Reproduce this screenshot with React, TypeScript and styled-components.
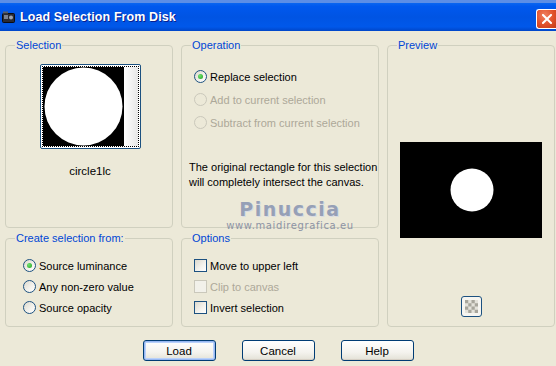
import React from 'react';
import styled, { createGlobalStyle } from 'styled-components';

const face = '#ECE9D8';
const groupBorder = '#D0D0BF';
const xpBlue = '#0046D5';
const dark = '#1C5180';
const disabledText = '#ACA899';

const Global = createGlobalStyle`
  html, body {
    margin: 0;
    padding: 0;
    width: 556px;
    height: 366px;
    overflow: hidden;
    background: ${face};
  }
  body {
    font-family: "Liberation Sans", Arial, sans-serif;
    font-size: 11px;
    color: #000;
  }
`;

const Window = styled.div`
  width: 556px;
  height: 366px;
  display: flex;
  flex-direction: column;
  background: ${face};
`;

const TitleBar = styled.div`
  height: 31px;
  flex-shrink: 0;
  display: flex;
  align-items: center;
  padding-left: 2px;
  box-sizing: border-box;
  border-top: 3px solid #5C8EE6;
  background: linear-gradient(
    to bottom,
    #0A66F0 0%,
    #0058EE 12%,
    #0054E3 50%,
    #0058EA 85%,
    #0046C8 100%
  );
`;

const TitleText = styled.span`
  margin-left: 5px;
  color: #fff;
  font-weight: bold;
  font-size: 12.5px;
  letter-spacing: 0.1px;
  text-shadow: 1px 1px 0 #0A1E8C;
`;

const CloseButton = styled.div`
  margin-left: auto;
  margin-top: 4px;
  width: 20px;
  height: 20px;
  box-sizing: border-box;
  border: 1px solid #fff;
  border-right: none;
  border-radius: 3px 0 0 3px;
  background: radial-gradient(circle at 40% 30%, #F08060 0%, #E0502A 55%, #C23A18 100%);
  display: flex;
  align-items: center;
  justify-content: center;
`;

const Body = styled.div`
  position: relative;
  flex: 1;
  display: flex;
  flex-direction: column;
  padding: 14px 0 0 5px;
`;

const Groups = styled.div`
  display: grid;
  grid-template-columns: 168px 198px 168px;
  grid-template-rows: 183px 89px;
  grid-template-areas:
    'sel op prev'
    'src opt prev';
  column-gap: 8px;
  row-gap: 10px;
`;

const Group = styled.div<{ $area: string }>`
  position: relative;
  box-sizing: border-box;
  border: 1px solid ${groupBorder};
  border-radius: 4px;
  grid-area: ${(p) => p.$area};
  display: flex;
  flex-direction: column;
`;

const Legend = styled.span`
  position: absolute;
  top: -7px;
  left: 9px;
  line-height: 13px;
  padding: 0 1px;
  background: ${face};
  color: ${xpBlue};
  white-space: nowrap;
`;

const SelectionGroup = styled(Group)`
  align-items: center;
  padding-top: 18px;
  padding-left: 2px;
`;

const Thumb = styled.div`
  border: 1px solid ${dark};
  border-radius: 2px;
  padding: 1px;
  background: #fff;
`;

const ThumbInner = styled.div`
  border: 1px dotted #000;
  display: flex;
`;

const ThumbLabel = styled.div`
  margin-top: 16px;
  font-size: 11.5px;
`;

const ListGroup = styled(Group)<{ $top: number; $left: number }>`
  padding-top: ${(p) => p.$top}px;
  padding-left: ${(p) => p.$left}px;
`;

const Row = styled.div<{ $h: number; $disabled?: boolean }>`
  height: ${(p) => p.$h}px;
  display: flex;
  align-items: center;
  gap: 3px;
  white-space: nowrap;
  color: ${(p) => (p.$disabled ? disabledText : '#000')};
`;

const Radio = styled.span<{ $checked?: boolean; $disabled?: boolean }>`
  width: 13px;
  height: 13px;
  box-sizing: border-box;
  border-radius: 50%;
  border: 1px solid ${(p) => (p.$disabled ? '#CAC8BB' : dark)};
  background: ${(p) =>
    p.$disabled ? face : 'linear-gradient(135deg, #DCD9CD 0%, #F4F3EE 60%, #fff 100%)'};
  display: flex;
  align-items: center;
  justify-content: center;
  flex-shrink: 0;

  &::after {
    content: '';
    display: ${(p) => (p.$checked ? 'block' : 'none')};
    width: 5px;
    height: 5px;
    border-radius: 50%;
    background: radial-gradient(circle at 35% 35%, #6FE26F, #21A121);
  }
`;

const Check = styled.span<{ $disabled?: boolean }>`
  width: 13px;
  height: 13px;
  box-sizing: border-box;
  border: 1px solid ${(p) => (p.$disabled ? '#CAC8BB' : dark)};
  background: ${(p) =>
    p.$disabled ? '#F2F1EA' : 'linear-gradient(135deg, #DCD9CD 0%, #F4F3EE 60%, #fff 100%)'};
  flex-shrink: 0;
`;

const Info = styled.div`
  margin-top: 26px;
  margin-left: -5px;
  line-height: 15px;
  white-space: nowrap;
`;

const PreviewGroup = styled(Group)`
  align-items: center;
`;

const PreviewCanvas = styled.div`
  margin-top: 96px;
  display: flex;
`;

const SmallButton = styled.div`
  margin-top: auto;
  margin-bottom: 9px;
  width: 21px;
  height: 21px;
  box-sizing: border-box;
  border: 1px solid ${dark};
  border-radius: 3px;
  background: #F6F5F0;
  display: flex;
  align-items: center;
  justify-content: center;
`;

const Buttons = styled.div`
  display: flex;
  justify-content: center;
  gap: 26px;
  margin-top: 13px;
  margin-left: -5px;
`;

const Button = styled.div<{ $default?: boolean }>`
  width: 73px;
  height: 21px;
  box-sizing: border-box;
  border: 1px solid #003C74;
  border-radius: 3px;
  background: linear-gradient(to bottom, #fff 0%, #F4F3EE 60%, #E3E1D6 100%);
  box-shadow: ${(p) =>
    p.$default ? 'inset 0 0 0 1px #97B7F2, inset 0 0 0 2px #B9D1FA' : 'inset 0 -1px 0 #D6D0C5'};
  display: flex;
  align-items: center;
  justify-content: center;
  font-size: 11.5px;
`;

const Watermark = styled.div`
  position: absolute;
  left: 224px;
  top: 167px;
  width: 132px;
  display: flex;
  flex-direction: column;
  align-items: center;
  color: #96A0B6;
  pointer-events: none;
`;

const MarkName = styled.span`
  font-family: "DejaVu Sans", sans-serif;
  font-size: 19px;
  font-weight: bold;
  letter-spacing: 1.5px;
  line-height: 22px;
  text-shadow: 1px 1px 0 #D8DCE4;
`;

const MarkSite = styled.span`
  font-family: "DejaVu Sans", sans-serif;
  font-size: 10px;
  letter-spacing: 0.6px;
  line-height: 12px;
  color: #8C93A4;
`;

const AppIcon = () => (
  <svg width="13" height="13" viewBox="0 0 13 13">
    <rect x="0.5" y="2.5" width="12" height="9" rx="1" fill="#2B2B33" stroke="#0B0B10" />
    <rect x="2" y="4" width="4" height="4" fill="#7A8190" />
    <circle cx="9" cy="6.5" r="2" fill="#9EA4B0" />
    <rect x="1" y="0.5" width="5" height="2" fill="#5A5F6A" />
  </svg>
);

const CloseX = () => (
  <svg width="10" height="10" viewBox="0 0 10 10">
    <path d="M1 1 L9 9 M9 1 L1 9" stroke="#fff" strokeWidth="2" strokeLinecap="square" />
  </svg>
);

const CircleThumb = () => (
  <svg width="95" height="79" viewBox="0 0 95 79">
    <defs>
      <linearGradient id="strip" x1="0" x2="1" y1="0" y2="0">
        <stop offset="0" stopColor="#fff" />
        <stop offset="1" stopColor="#E6E6E6" />
      </linearGradient>
    </defs>
    <rect x="0" y="0" width="81" height="79" fill="#000" />
    <circle cx="40.5" cy="39.5" r="39" fill="#fff" />
    <rect x="81" y="0" width="14" height="79" fill="url(#strip)" />
  </svg>
);

const PreviewImage = () => (
  <svg width="142" height="96" viewBox="0 0 142 96">
    <rect width="142" height="96" fill="#000" />
    <circle cx="72" cy="48" r="21.5" fill="#fff" />
  </svg>
);

const Checker = () => (
  <svg width="13" height="13" viewBox="0 0 13 13">
    <rect width="13" height="13" fill="#E4E2DA" />
    {[0, 1, 2, 3].map((r) =>
      [0, 1, 2, 3].map((c) =>
        (r + c) % 2 === 0 ? (
          <rect key={`${r}-${c}`} x={c * 3.25} y={r * 3.25} width="3.25" height="3.25" fill="#A8A69C" />
        ) : null
      )
    )}
  </svg>
);

export default function App() {
  return (
    <Window>
      <Global />
      <TitleBar>
        <AppIcon />
        <TitleText>Load Selection From Disk</TitleText>
        <CloseButton>
          <CloseX />
        </CloseButton>
      </TitleBar>

      <Body>
        <Groups>
          <SelectionGroup $area="sel">
            <Legend>Selection</Legend>
            <Thumb>
              <ThumbInner>
                <CircleThumb />
              </ThumbInner>
            </Thumb>
            <ThumbLabel>circle1lc</ThumbLabel>
          </SelectionGroup>

          <ListGroup $area="op" $top={19} $left={12}>
            <Legend>Operation</Legend>
            <Row $h={23}>
              <Radio $checked />
              Replace selection
            </Row>
            <Row $h={23} $disabled>
              <Radio $disabled />
              Add to current selection
            </Row>
            <Row $h={23} $disabled>
              <Radio $disabled />
              Subtract from current selection
            </Row>
            <Info>
              The original rectangle for this selection
              <br />
              will completely intersect the canvas.
            </Info>
          </ListGroup>

          <PreviewGroup $area="prev">
            <Legend>Preview</Legend>
            <PreviewCanvas>
              <PreviewImage />
            </PreviewCanvas>
            <SmallButton>
              <Checker />
            </SmallButton>
          </PreviewGroup>

          <ListGroup $area="src" $top={16} $left={17}>
            <Legend>Create selection from:</Legend>
            <Row $h={21}>
              <Radio $checked />
              Source luminance
            </Row>
            <Row $h={21}>
              <Radio />
              Any non-zero value
            </Row>
            <Row $h={21}>
              <Radio />
              Source opacity
            </Row>
          </ListGroup>

          <ListGroup $area="opt" $top={16} $left={12}>
            <Legend>Options</Legend>
            <Row $h={21}>
              <Check />
              Move to upper left
            </Row>
            <Row $h={21} $disabled>
              <Check $disabled />
              Clip to canvas
            </Row>
            <Row $h={21}>
              <Check />
              Invert selection
            </Row>
          </ListGroup>
        </Groups>

        <Buttons>
          <Button $default>Load</Button>
          <Button>Cancel</Button>
          <Button>Help</Button>
        </Buttons>

        <Watermark>
          <MarkName>Pinuccia</MarkName>
          <MarkSite>www.maidiregrafica.eu</MarkSite>
        </Watermark>
      </Body>
    </Window>
  );
}
